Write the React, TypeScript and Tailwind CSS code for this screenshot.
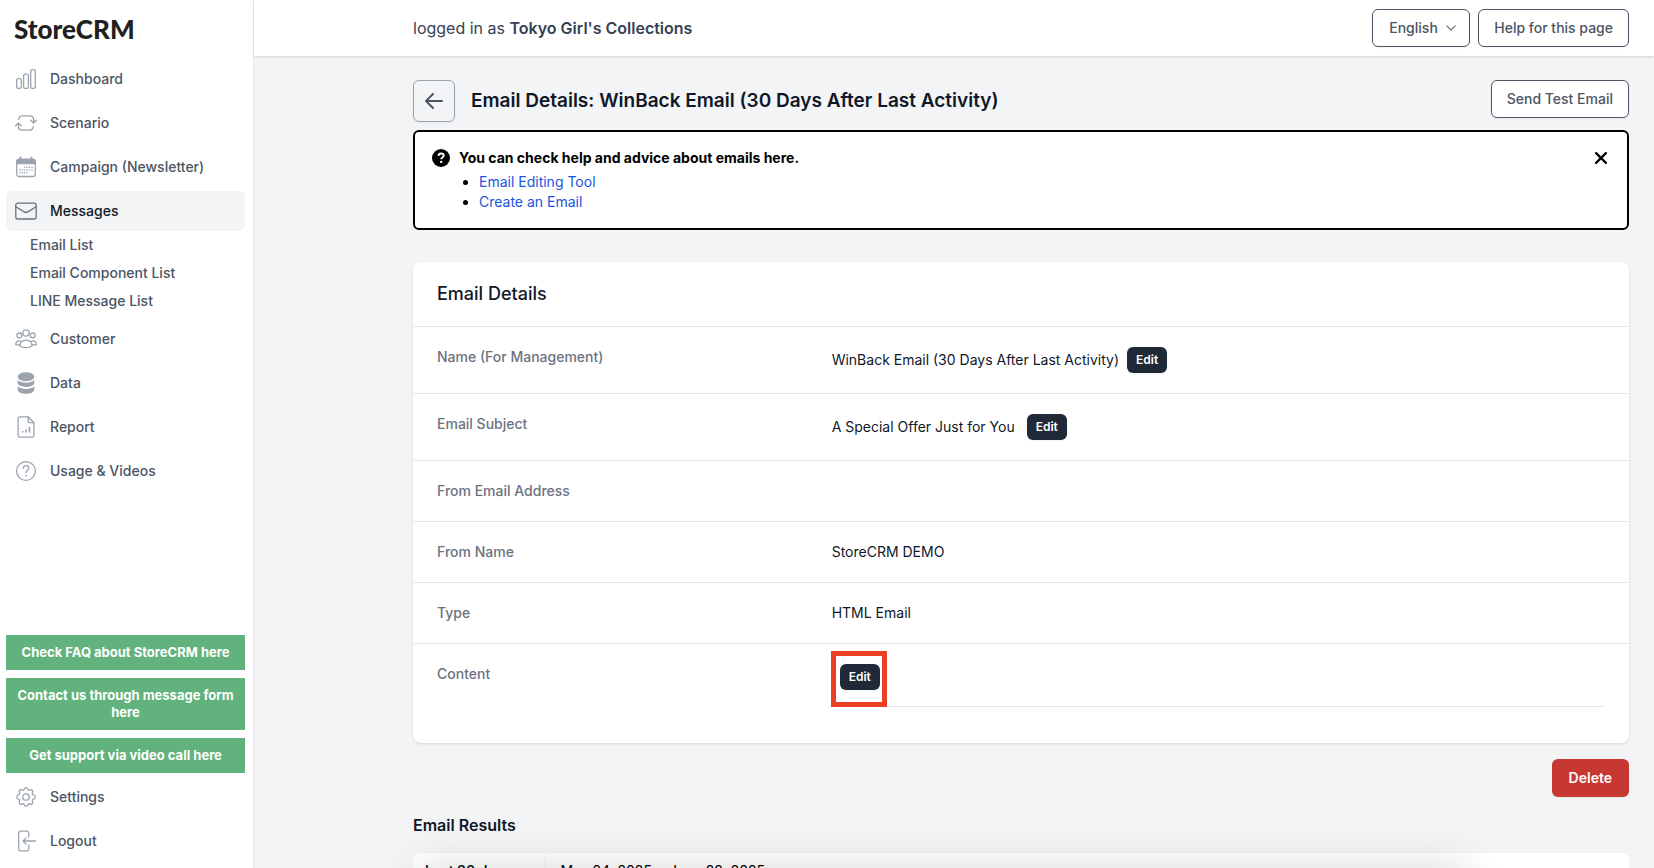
import type { ReactNode } from "react";

function Icon({ children, active = false }: { children: ReactNode; active?: boolean }) {
  return (
    <svg
      aria-hidden="true"
      viewBox="0 0 22 22"
      fill="none"
      stroke="currentColor"
      strokeWidth="1.3"
      strokeLinecap="round"
      strokeLinejoin="round"
      className={active ? "size-[22px] shrink-0 text-[#6b7280]" : "size-[22px] shrink-0 text-[#9ca3af]"}
    >
      {children}
    </svg>
  );
}

const icons = {
  dashboard: (
    <>
      <rect x="1.7" y="10.6" width="4.6" height="9.7" rx="1.4" />
      <rect x="8.6" y="6.2" width="4.8" height="14.1" rx="1.4" />
      <rect x="15.7" y="1.7" width="4.6" height="18.6" rx="1.4" />
    </>
  ),
  scenario: (
    <>
      <path d="M3.6 7.4C4 5 5.4 3.8 7.6 3.8h7c2.6 0 4.1 1.6 4.1 4.2v2.4" />
      <path d="M15.8 8.2l2.9 2.8 2.8-2.8" />
      <path d="M18.4 14.6c-.4 2.4-1.8 3.6-4 3.6h-7c-2.6 0-4.1-1.6-4.1-4.2v-2.4" />
      <path d="M.5 13.8L3.3 11l2.9 2.8" />
    </>
  ),
  campaign: (
    <>
      <rect x="1.7" y="3.5" width="18.6" height="17" rx="2.2" />
      <path d="M1.7 7.5V5.5a2 2 0 0 1 2-2h14.6a2 2 0 0 1 2 2v2z" fill="currentColor" />
      <path d="M5.5 1.5v3M16.500 1.5v3" strokeWidth="2" />
      <path
        d="M9.5 11.2h.1M12 11.2h.1M14.5 11.2h.1M17 11.2h.1M5 14h.1M7.3 14h.1M9.5 14h.1M12 14h.1M14.5 14h.1M17 14h.1M5 16.7h.1M7.3 16.7h.1M9.5 16.7h.1M12 16.7h.1"
        strokeWidth="1.5"
      />
    </>
  ),
  messages: (
    <>
      <rect x=".8" y="3.2" width="20.4" height="15.8" rx="1.8" />
      <path d="M.9 6.7l8.3 5.2c1.2.8 2.4.8 3.6 0l8.3-5.2" />
    </>
  ),
  customer: (
    <>
      <circle cx="11" cy="5" r="3.2" />
      <circle cx="4.3" cy="7.4" r="2.4" />
      <circle cx="17.7" cy="7.4" r="2.4" />
      <path d="M5 18c-.5-3.2 2.4-5.9 6-5.9s6.500 2.7 6 5.900c-1.600 1-3.600 1.600-6 1.600S6.600 19 5 18z" />
      <path d="M4.7 16.9H.9c-.4-2.3.9-4 3.2-4 .9 0 1.6.2 2.2.6M17.3 16.9h3.8c.4-2.3-.9-4-3.2-4-.9 0-1.6.2-2.2.6" />
    </>
  ),
  data: (
    <g fill="currentColor" stroke="none">
      <ellipse cx="11" cy="4.7" rx="8.3" ry="4.5" />
      <path d="M2.7 8c1.7 1.9 4.9 2.7 8.3 2.7s6.600-.8 8.300-2.700v2.700c0 2.500-3.700 4.200-8.300 4.200s-8.300-1.700-8.300-4.200z" />
      <path d="M2.7 14.2c1.7 1.9 4.9 2.7 8.3 2.7s6.600-.8 8.300-2.700v3.200c0 2.500-3.700 4.400-8.300 4.400s-8.300-1.900-8.300-4.400z" />
    </g>
  ),
  report: (
    <>
      <path d="M13.2.8H4.8a1.7 1.7 0 0 0-1.7 1.7v17c0 .9.8 1.7 1.7 1.7h12.400c.9 0 1.700-.8 1.700-1.700V6.700z" />
      <path d="M13.2.8v4.2c0 1 .7 1.7 1.7 1.7h4" />
      <path d="M7.600 15v1.500M11 13.500v3M14.500 11v5.500" strokeWidth="1.600" strokeLinecap="butt" />
    </>
  ),
  usage: (
    <>
      <circle cx="11" cy="11" r="9.4" />
      <path d="M8.3 8.2c.1-1.600 1.200-2.500 2.800-2.500 1.500 0 2.700.9 2.700 2.400 0 2.200-2.800 2.200-2.800 4.500" />
      <path d="M11 15.6v.4" strokeWidth="1.6" />
    </>
  ),
  settings: (
    <>
      <circle cx="11" cy="11" r="3.2" />
      <path d="M9.200 3.300C9.400 2.200 10 1.600 11 1.600s1.600.6 1.800 1.700c.2.900 1.200 1.300 2 .8.900-.6 1.800-.6 2.500.1s.8 1.600.2 2.500c-.5.800-.1 1.800.8 2 1.100.2 1.900.9 1.900 2.300s-.8 2.100-1.900 2.300c-.9.200-1.300 1.200-.8 2 .6.900.5 1.800-.2 2.500s-1.600.7-2.500.1c-.8-.5-1.800-.1-2 .8-.2 1.100-.8 1.700-1.800 1.700s-1.600-.6-1.800-1.700c-.2-.9-1.200-1.300-2-.8-.9.600-1.800.6-2.500-.1s-.8-1.600-.2-2.500c.5-.8.1-1.800-.8-2-1.100-.2-1.900-.9-1.900-2.300s.8-2.100 1.900-2.300c.9-.2 1.300-1.200.8-2-.6-.9-.5-1.800.2-2.500s1.600-.7 2.500-.1c.8.500 1.800.1 2-.8z" />
    </>
  ),
  logout: (
    <>
      <path d="M13.8 7V3.6c0-1.500-.9-2.500-2.500-2.500H6.200c-1.500 0-2.500 1-2.500 2.500v14.800c0 1.500 1 2.500 2.500 2.500h5.100c1.600 0 2.500-1 2.500-2.500V15" />
      <path d="M20.5 11H8.300M11 8l-3 3 3 3" />
    </>
  ),
};

function NavItem({ icon, label, active = false }: { icon: ReactNode; label: string; active?: boolean }) {
  return (
    <a
      href="#"
      className={
        active
          ? "flex h-10 items-center gap-[13px] rounded-md bg-gray-100 px-[9px] text-gray-900"
          : "flex h-10 items-center gap-[13px] rounded-md px-[9px] text-[#4b5563]"
      }
    >
      <Icon active={active}>{icon}</Icon>
      {label}
    </a>
  );
}

function SupportLink({ children }: { children: ReactNode }) {
  return (
    <a href="#" className="block bg-[#61b27c] px-2 py-[9px] text-center text-[13px] leading-[17px] font-bold text-white">
      {children}
    </a>
  );
}

function Sidebar() {
  return (
    <aside className="z-10 flex w-[254px] shrink-0 flex-col border-r border-gray-200 bg-white pr-2 pb-[7px] pl-1.5 text-sm font-medium">
      <a href="#" className="mb-0.5 flex h-[57px] items-center px-2 font-['Lato'] text-[26px] leading-8 font-black text-[#231f20]">
        StoreCRM
      </a>
      <nav className="flex flex-col gap-1">
        <NavItem icon={icons.dashboard} label="Dashboard" />
        <NavItem icon={icons.scenario} label="Scenario" />
        <NavItem icon={icons.campaign} label="Campaign (Newsletter)" />
        <div>
          <NavItem icon={icons.messages} label="Messages" active />
          <ul className="pl-6 leading-7 text-[#4b5563]">
            <li><a href="#">Email List</a></li>
            <li><a href="#">Email Component List</a></li>
            <li><a href="#">LINE Message List</a></li>
          </ul>
        </div>
        <NavItem icon={icons.customer} label="Customer" />
        <NavItem icon={icons.data} label="Data" />
        <NavItem icon={icons.report} label="Report" />
        <NavItem icon={icons.usage} label="Usage & Videos" />
      </nav>
      <div className="mt-auto flex flex-col gap-2">
        <SupportLink>Check FAQ about StoreCRM here</SupportLink>
        <SupportLink>Contact us through message form here</SupportLink>
        <SupportLink>Get support via video call here</SupportLink>
      </div>
      <nav className="mt-1 flex flex-col gap-1">
        <NavItem icon={icons.settings} label="Settings" />
        <NavItem icon={icons.logout} label="Logout" />
      </nav>
    </aside>
  );
}

function OutlineButton({ children }: { children: ReactNode }) {
  return (
    <button
      type="button"
      className="h-[38px] rounded-md border border-[#4b5563] bg-white px-[15px] text-sm font-medium text-[#4b5563] shadow-xs"
    >
      {children}
    </button>
  );
}

function TopBar() {
  return (
    <header className="z-10 flex h-14 shrink-0 items-center justify-between bg-white pr-[25px] pl-[159px] shadow-sm">
      <p className="text-base text-gray-700">
        logged in as <span className="font-semibold">Tokyo Girl's Collections</span>
      </p>
      <div className="flex gap-2">
        <div className="relative">
          <select
            aria-label="Language"
            defaultValue="English"
            className="h-[38px] w-[98px] appearance-none rounded-md border border-[#4b5563] bg-white px-4 text-sm font-medium text-[#4b5563] shadow-xs"
          >
            <option>English</option>
          </select>
          <svg
            aria-hidden="true"
            viewBox="0 0 10 6"
            fill="none"
            stroke="currentColor"
            strokeWidth="1.2"
            strokeLinecap="round"
            strokeLinejoin="round"
            className="pointer-events-none absolute top-4 right-3.5 h-1.5 w-2.5 text-gray-500"
          >
            <path d="M.8.8 5 5 9.2.8" />
          </svg>
        </div>
        <OutlineButton>Help for this page</OutlineButton>
      </div>
    </header>
  );
}

function HelpNotice() {
  return (
    <section className="flex items-start rounded-md border-2 border-black bg-white px-[17px] py-4 text-sm text-black">
      <svg aria-hidden="true" viewBox="0 0 18 18" className="mt-px mr-[9px] size-[18px] shrink-0">
        <circle cx="9" cy="9" r="9" fill="#000" />
        <path
          d="M6.5 6.9C6.6 5.3 7.6 4.5 9.1 4.5c1.5 0 2.6.9 2.6 2.2 0 1.8-2.5 1.7-2.5 3.6"
          fill="none"
          stroke="#fff"
          strokeWidth="1.9"
        />
        <circle cx="9.2" cy="12.9" r="1.2" fill="#fff" />
      </svg>
      <div className="flex-1">
        <p className="font-bold">You can check help and advice about emails here.</p>
        <ul className="mt-1 list-disc pl-5">
          <li><a href="#" className="text-[#1a56db]">Email Editing Tool</a></li>
          <li><a href="#" className="text-[#1a56db]">Create an Email</a></li>
        </ul>
      </div>
      <button type="button" aria-label="Close" className="mt-1 mr-[3px]">
        <svg aria-hidden="true" viewBox="0 0 12 12" stroke="#000" strokeWidth="2.2" strokeLinecap="round" className="size-3">
          <path d="M1.1 1.1l9.8 9.8M10.9 1.1l-9.8 9.8" />
        </svg>
      </button>
    </section>
  );
}

function EditButton() {
  return (
    <button type="button" className="h-[26px] rounded-md bg-[#1f2937] px-[9px] text-xs font-semibold text-white shadow-xs">
      Edit
    </button>
  );
}

function DetailRow({ label, children }: { label: string; children?: ReactNode }) {
  return (
    <div className="grid grid-cols-3 gap-4 border-t border-gray-200 px-6 py-5">
      <dt className="font-medium text-[#6b7280]">{label}</dt>
      <dd className="col-span-2 flex items-center text-gray-900">{children}</dd>
    </div>
  );
}

function DetailsCard() {
  return (
    <section className="mt-8 rounded-lg bg-white text-sm shadow-sm">
      <h2 className="px-6 py-5 text-lg leading-6 font-medium text-gray-900">Email Details</h2>
      <dl className="pb-9">
        <DetailRow label="Name (For Management)">
          <span className="mr-2">WinBack Email (30 Days After Last Activity)</span>
          <EditButton />
        </DetailRow>
        <DetailRow label="Email Subject">
          <span className="mr-3">A Special Offer Just for You</span>
          <EditButton />
        </DetailRow>
        <DetailRow label="From Email Address" />
        <DetailRow label="From Name">StoreCRM DEMO</DetailRow>
        <DetailRow label="Type">HTML Email</DetailRow>
        <div className="grid grid-cols-3 gap-4 border-t border-gray-200 px-6">
          <dt className="pt-5 font-medium text-[#6b7280]">Content</dt>
          <dd className="relative col-span-2 border-b border-gray-200 px-2 pt-5 pb-4">
            <EditButton />
            <span className="pointer-events-none absolute top-[7px] -left-px size-14 border-5 border-[#eb4026]" />
          </dd>
        </div>
      </dl>
    </section>
  );
}

export default function App() {
  return (
    <div className="relative flex h-screen overflow-hidden bg-gray-100 font-['Inter',sans-serif]">
      <Sidebar />
      <div className="flex min-w-0 flex-1 flex-col">
        <TopBar />
        <main className="min-h-0 flex-1 overflow-hidden pt-6 pr-[25px] pl-[159px]">
          <div className="flex items-start justify-between">
            <div className="flex items-center gap-4">
              <button
                type="button"
                aria-label="Back"
                className="flex size-[42px] items-center justify-center rounded-md border border-[#9ca3af] text-[#4b5563] shadow-xs"
              >
                <svg
                  aria-hidden="true"
                  viewBox="0 0 18 16"
                  fill="none"
                  stroke="currentColor"
                  strokeWidth="1.9"
                  strokeLinecap="round"
                  strokeLinejoin="round"
                  className="h-4 w-[18px]"
                >
                  <path d="M8 1L1 8l7 7M1 8h16" />
                </svg>
              </button>
              <h1 className="text-[19px] leading-7 font-semibold text-gray-900">
                Email Details: WinBack Email (30 Days After Last Activity)
              </h1>
            </div>
            <OutlineButton>Send Test Email</OutlineButton>
          </div>
          <div className="mt-2">
            <HelpNotice />
          </div>
          <DetailsCard />
          <div className="mt-4 flex justify-end">
            <button type="button" className="h-[38px] rounded-md bg-[#c83832] px-[17px] text-sm font-semibold text-white shadow-xs">
              Delete
            </button>
          </div>
          <h2 className="mt-4 text-base font-semibold text-gray-900">Email Results</h2>
          <table className="mt-4 w-full overflow-hidden rounded-md bg-white text-left text-sm">
            <tbody>
              <tr>
                <th className="w-[132px] border-r border-gray-100 px-3 py-2 font-semibold text-gray-900">Last 30 days</th>
                <td className="px-[15px] py-2 text-black">May 24, 2025 ~ June 22, 2025</td>
              </tr>
            </tbody>
          </table>
        </main>
      </div>
      <div className="pointer-events-none absolute top-full right-[190px] left-[420px] h-10 shadow-[0_0_44px_rgba(0,0,0,0.16)]" />
    </div>
  );
}
